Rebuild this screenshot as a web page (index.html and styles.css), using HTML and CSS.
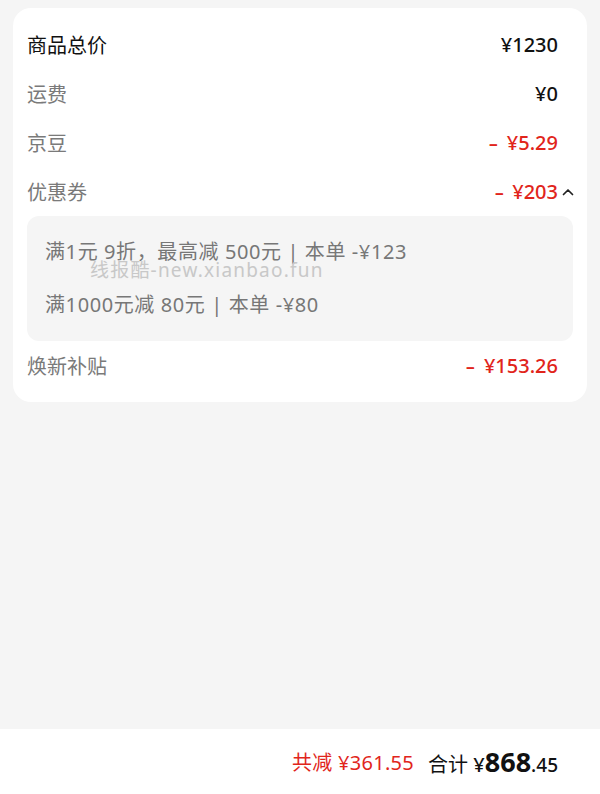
FILE: index.html
```html
<!DOCTYPE html>
<html lang="zh-CN">
<head>
    <meta charset="UTF-8">
    <meta name="viewport" content="width=device-width, initial-scale=1.0">
    <title>订单金额明细</title>
    <link rel="stylesheet" href="styles.css">
</head>
<body>

<div class="page">
    <div class="card">
        <div class="row">
            <span class="label main">商品总价</span>
            <span class="value">¥1230</span>
        </div>
        <div class="row">
            <span class="label">运费</span>
            <span class="value">¥0</span>
        </div>
        <div class="row">
            <span class="label">京豆</span>
            <span class="value red"><span class="minus">-</span>¥5.29</span>
        </div>
        <div class="row">
            <span class="label">优惠券</span>
            <span class="value red with-arrow"><span class="minus">-</span>¥203
                <svg class="caret" width="12" height="8" viewBox="0 0 12 8">
                    <path d="M1.5 6.5 L6 2 L10.5 6.5" fill="none" stroke="#222" stroke-width="1.7" stroke-linecap="round" stroke-linejoin="round"/>
                </svg>
            </span>
        </div>

        <div class="coupon-box">
            <div class="coupon-line">满1元 9折，最高减 500元 | 本单 -¥123</div>
            <div class="coupon-line">满1000元减 80元 | 本单 -¥80</div>
            <div class="watermark">线报酷-new.xianbao.fun</div>
        </div>

        <div class="row">
            <span class="label">焕新补贴</span>
            <span class="value red"><span class="minus">-</span>¥153.26</span>
        </div>
    </div>

    <div class="footer">
        <span class="saved">共减 ¥361.55</span>
        <span class="total">合计 <span class="yen">¥</span><span class="big">868</span><span class="small">.45</span></span>
    </div>
</div>

</body>
</html>
```

FILE: styles.css
```css
body{
    margin: 0;
    padding: 0;
    background: #f5f5f5;
    font-family: "Noto Sans", "Noto Sans CJK SC", sans-serif;
}
.page{
    display: flex;
    flex-direction: column;
    min-height: 100vh;
}
.card{
    margin: 8px 13px 0;
    padding: 12px 14px 12px;
    background: #fff;
    border-radius: 18px;
}
.row{
    display: flex;
    justify-content: space-between;
    align-items: center;
    height: 49px;
    padding-right: 15px;
}
.label{
    font-family: "Noto Sans CJK SC", sans-serif;
    font-size: 20px;
    color: #7a7a7a;
}
.label.main{
    color: #111;
}
.value{
    font-size: 20px;
    font-weight: 500;
    color: #111;
}
.value.red{
    color: #e1251b;
}
.minus{
    display: inline-block;
    transform: scaleX(1.5);
    margin-right: 10px;
}
.with-arrow{
    position: relative;
}
.caret{
    position: absolute;
    right: -16px;
    top: 10px;
}

.coupon-box{
    position: relative;
    display: flex;
    flex-direction: column;
    gap: 17px;
    padding: 18px 18px;
    background: #f5f5f5;
    border-radius: 12px;
}
.coupon-line{
    font-size: 20px;
    line-height: 36px;
    letter-spacing: 0.6px;
    color: #777;
}
.watermark{
    position: absolute;
    left: 63px;
    top: 39px;
    font-size: 19px;
    letter-spacing: 1.2px;
    color: #c8c8c8;
    pointer-events: none;
}

.footer{
    margin-top: auto;
    height: 65px;
    background: #fff;
    display: flex;
    justify-content: flex-end;
    align-items: center;
    gap: 14px;
    padding-right: 42px;
}
.saved{
    font-size: 20px;
    letter-spacing: 0.3px;
    color: #e1251b;
}
.total{
    font-size: 20px;
    color: #111;
}
.total .yen{
    font-weight: 500;
}
.total .big{
    font-size: 27px;
    font-weight: 700;
}
.total .small{
    font-size: 19px;
    font-weight: 500;
}
```
